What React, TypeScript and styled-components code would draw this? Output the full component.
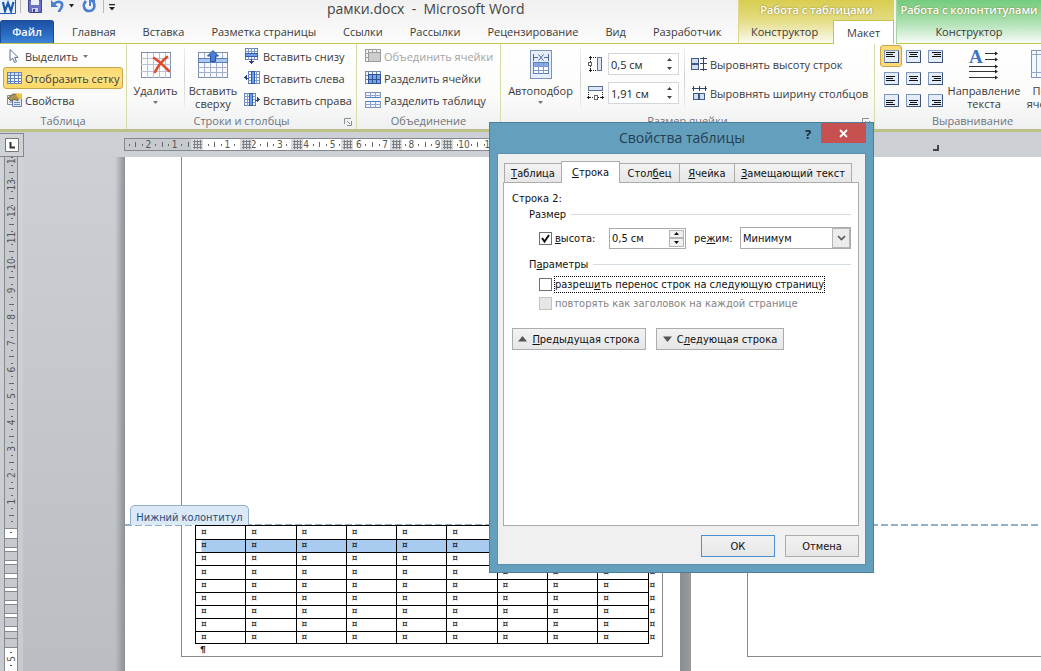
import React from "react";
import styled, { createGlobalStyle, css } from "styled-components";

const UI = `"Open Sans", "Noto Sans", sans-serif`;
const DLG = `"DejaVu Sans Condensed", "DejaVu Sans", sans-serif`;

const Global = createGlobalStyle`
  * { box-sizing: border-box; }
  body { margin: 0; background: #c3c7cb; font-family: ${UI}; font-size: 11px; color: #3a3a3a; overflow: hidden; }
  button, input, select { font: inherit; color: inherit; margin: 0; }
  svg { display: block; flex: none; }
`;

const Shell = styled.div`
  position: relative;
  display: flex;
  flex-direction: column;
  min-height: 100vh;
  overflow: hidden;
`;

/* ---------- Window header ---------- */

const Header = styled.header`
  display: flex;
  background: linear-gradient(#f0f0f0, #fcfcfc);
`;

const HeaderMain = styled.div`
  flex: 1;
  min-width: 0;
  border-bottom: 1px solid #c3c548;
`;

const TitleRow = styled.div`
  display: flex;
  height: 20px;
  align-items: flex-start;
`;

const QuickBar = styled.div`
  display: flex;
  align-items: flex-start;
  width: 127px;
`;

const QuickButton = styled.button`
  border: 0;
  padding: 0;
  background: none;
`;

const WindowTitle = styled.h1`
  flex: 1;
  margin: 0;
  padding-left: 200px;
  font-size: 14px;
  font-weight: 400;
  line-height: 17px;
  color: #444;
  white-space: nowrap;
`;

const TabRow = styled.nav`
  display: flex;
  gap: 27px;
  height: 23px;
`;

const RibbonTab = styled.button<{ $kind?: "file" | "active" }>`
  flex: none;
  border: 0;
  padding: 0;
  background: none;
  line-height: 22px;
  white-space: nowrap;
  ${(p) =>
    p.$kind === "file" &&
    css`
      width: 54px;
      margin-right: -9px;
      color: #fff;
      font-weight: 600;
      border: 1px solid #1a4c96;
      border-bottom: 0;
      border-radius: 3px 3px 0 0;
      background: linear-gradient(#1c51a3, #2a6cc4 60%, #3c83d6);
    `}
  ${(p) =>
    p.$kind === "active" &&
    css`
      flex: 1;
      height: 24px;
      background: #fff;
      border: 1px solid #c3c548;
      border-bottom: 0;
    `}
`;

const Context = styled.div<{ $tone: "yellow" | "green" }>`
  flex: none;
  width: ${(p) => (p.$tone === "yellow" ? "156px" : "145px")};
  margin-left: ${(p) => (p.$tone === "yellow" ? "0" : "2px")};
  border-bottom: 1px solid #c3c548;
  background: ${(p) =>
    p.$tone === "yellow"
      ? "linear-gradient(#d8cd50, #e3db80 45%, #fbfaf0)"
      : "linear-gradient(#74cc7c, #a4dda9 45%, #f6fbf6)"};
  border-left: 1px solid ${(p) => (p.$tone === "yellow" ? "#ddd787" : "#a6d6a6")};
`;

const ContextTitle = styled.div`
  height: 20px;
  line-height: 20px;
  text-align: center;
  color: #fff;
  font-weight: 600;
  white-space: nowrap;
  text-shadow: 0 0 2px #77762f;
`;

const ContextTabs = styled.div<{ $center?: boolean }>`
  display: flex;
  gap: 15px;
  height: 23px;
  padding-left: ${(p) => (p.$center ? 0 : 12)}px;
  justify-content: ${(p) => (p.$center ? "center" : "flex-start")};
`;

/* ---------- Ribbon ---------- */

const Ribbon = styled.div`
  display: flex;
  height: 88px;
  flex: none;
  background: linear-gradient(#ffffff, #fbfbfa 60%, #eff0f1);
  border-bottom: 3px solid #bdc087;
`;

const Group = styled.section<{ $w: number }>`
  display: flex;
  flex-direction: column;
  flex: none;
  width: ${(p) => p.$w}px;
  padding-top: 1px;
  border-right: 1px solid #d9dbab;
`;

const GroupBody = styled.div`
  display: flex;
  height: 67px;
`;

const Caption = styled.div`
  display: flex;
  justify-content: center;
  position: relative;
  line-height: 17px;
  color: #70747c;
`;

const Launcher = styled.button`
  position: absolute;
  right: 4px;
  top: 6px;
  padding: 0;
  border: 0;
  background: none;
`;

const Stack = styled.div<{ $pad?: number }>`
  display: flex;
  flex-direction: column;
  padding-left: ${(p) => p.$pad ?? 0}px;
`;

const SmallButton = styled.button<{ $on?: boolean }>`
  display: flex;
  align-items: center;
  gap: 2px;
  height: 22px;
  padding: 0 3px 0 2px;
  border: 1px solid ${(p) => (p.$on ? "#c9a64c" : "transparent")};
  border-radius: 3px;
  background: ${(p) => (p.$on ? "linear-gradient(#fbd972, #fde183 50%, #fdd866)" : "none")};
  white-space: nowrap;
  &:disabled { color: #a3a3a3; }
`;

const BigButton = styled.button<{ $w: number }>`
  display: flex;
  flex-direction: column;
  flex: none;
  align-items: center;
  width: ${(p) => p.$w}px;
  height: 66px;
  padding: 3px 0 0;
  border: 0;
  background: none;
  line-height: 13px;
  white-space: nowrap;
  svg + span { margin-top: 5px; }
  span + svg { margin-top: 4px; }
`;

const Divider = styled.div`
  width: 1px;
  margin: 2px 0;
  background: linear-gradient(#f2f2f2, #cfd1d4, #f2f2f2);
`;

const SizeColumn = styled.div<{ $tight?: boolean }>`
  display: flex;
  flex-direction: column;
  gap: 7px;
  padding: ${(p) => (p.$tight ? "8px 0 0 3px" : "8px 5px 0 6px")};
`;

const SizeRow = styled.div`
  display: flex;
  align-items: center;
  gap: 4px;
  height: 22px;
`;

const RibbonSpin = styled.div`
  display: flex;
  align-items: center;
  width: 71px;
  height: 22px;
  border: 1px solid #d5d7da;
  background: #fff;
  color: #222;
`;

const BareInput = styled.input`
  flex: 1;
  min-width: 0;
  height: 100%;
  border: 0;
  padding: 0 2px;
  outline: 0;
  background: none;
`;

const SpinButtons = styled.div`
  display: flex;
  flex-direction: column;
  align-items: center;
  width: 18px;
  gap: 6px;
`;

const ArrowButton = styled.button`
  display: block;
  padding: 0;
  border: 0;
  background: none;
`;

const AlignGrid = styled.div`
  display: grid;
  flex: none;
  grid-template-columns: repeat(3, 22px);
  grid-auto-rows: 22px;
  padding-left: 5px;
`;

const AlignButton = styled.button<{ $on?: boolean }>`
  display: grid;
  place-items: center;
  padding: 0;
  border: 1px solid ${(p) => (p.$on ? "#c9a64c" : "transparent")};
  border-radius: 3px;
  background: ${(p) => (p.$on ? "#fcdb76" : "none")};
`;

/* ---------- Icons ---------- */

const Down = ({ c = "#777" }: { c?: string }) => (
  <svg width="5" height="3" viewBox="0 0 5 3"><path d="M0 0h5L2.500 3z" fill={c} /></svg>
);
const Up = ({ c = "#444" }: { c?: string }) => (
  <svg width="5" height="3" viewBox="0 0 5 3"><path d="M0 3h5L2.500 0z" fill={c} /></svg>
);

const Svg16 = ({ children }: { children: React.ReactNode }) => (
  <svg width="17" height="16" viewBox="0 0 17 16" fill="none" shapeRendering="crispEdges">{children}</svg>
);

const CursorIcon = () => (
  <svg width="17" height="16" viewBox="0 0 17 16">
    <path d="M4 1.500v11l2.600-2.300 1.900 4.300 2-.9-1.900-4.200h3.500z" fill="#fdfdff" stroke="#5b6f98" strokeWidth="1" />
  </svg>
);
const GridIcon = () => (
  <Svg16>
    <path d="M1.500 2.500h14v11h-14z" fill="#f8fafe" stroke="#6d88b8" />
    <path d="M2 3h13v2H2zM2 3h2v10H2z" fill="#d3e0f4" />
    <path d="M1 5.500h15M1 8.500h15M1 11.500h15M4.500 2v12M8.500 2v12M12.500 2v12" stroke="#5f80ba" />
  </Svg16>
);
const PropsIcon = () => (
  <svg width="17" height="16" viewBox="0 0 17 16">
    <path d="M1.500 3.500h10v9h-10z" fill="#eef2f8" stroke="#7a8cab" />
    <path d="M6.500 6.500h9v8h-9z" fill="#dce6f3" stroke="#6980a6" />
    <path d="M8 10.500h6M8 12.500h6M3 10h3" stroke="#6c8cc0" />
    <path d="M2 6l5-4 7 .500-2 6-4-1-3 1.500z" fill="#a8945a" stroke="#5d5130" strokeWidth=".8" />
    <path d="M9.500 1.500h6.500v5l-3 1z" fill="#efc33f" />
  </svg>
);
const InsertBelowIcon = () => (
  <Svg16>
    <path d="M1.500.5h12v11h-12z" fill="#f6f9fe" stroke="#6583bb" />
    <path d="M1 3.500h13M4.500 0v12M7.500 0v12M10.500 0v12" stroke="#7f9aca" />
    <path d="M1.500 5.500h12v3h-12z" fill="#6fa0ee" stroke="#2f5cab" />
    <path d="M7 11h1v2h2l-2.500 3L5 13h2z" fill="#2a4680" />
  </Svg16>
);
const InsertSideIcon = ({ right }: { right?: boolean }) => (
  <svg width="17" height="16" viewBox="0 0 17 16" fill="none" shapeRendering="crispEdges">
    <g transform={right ? "translate(16 0) scale(-1 1)" : undefined}>
      <path d="M4.500 1.500h11v12h-11z" fill="#f6f9fe" stroke="#6583bb" />
      <path d="M4 4.500h12M4 7.500h12M4 10.500h12M12.500 1v13" stroke="#7f9aca" />
      <path d="M7.500 1.500h3v12h-3z" fill="#6fa0ee" stroke="#2f5cab" />
      <path d="M5 7.500H3V5L0 7.500 3 10V8.500h2z" fill="#2a4680" />
    </g>
  </svg>
);
const MergeIcon = () => (
  <Svg16>
    <path d="M.5 1.500h15v12H.5z" fill="#f1f1f1" stroke="#9b9b9b" />
    <path d="M0 5.500h3M0 9.500h3M3.500 1v12M7.500 1v3M11.500 1v3" stroke="#a5a5a5" />
    <path d="M3.500 4.500h12v9h-12z" fill="#cdcdcd" stroke="#9b9b9b" />
  </Svg16>
);
const SplitCellsIcon = () => (
  <Svg16>
    <path d="M.5 1.500h15v12H.5z" fill="#f1f5fb" stroke="#6f87b0" />
    <path d="M0 5.500h3M0 9.500h3M3.500 1v12M7.500 1v3M11.500 1v3" stroke="#6f87b0" />
    <path d="M3.500 4.500h12v9h-12z" fill="#7ba3e4" stroke="#2f5297" />
    <path d="M7.500 4v9M11.500 4v9M3 9.500h12" stroke="#2f5297" />
  </Svg16>
);
const SplitTableIcon = () => (
  <Svg16>
    <path d="M.5.5h15v5H.5zM.5 9.500h15v6H.5z" fill="#f3f7fd" stroke="#7b93bd" />
    <path d="M0 3.500h16M5.500 1v5M10.500 1v5M0 12.500h16M5.500 10v5M10.500 10v5" stroke="#8fa5cb" />
    <path d="M1 5h14v1H1zM1 9h14v1H1z" fill="#4d7fd0" />
  </Svg16>
);
const DeleteIcon = () => (
  <svg width="30" height="31" viewBox="0 0 30 31" fill="none">
    <g shapeRendering="crispEdges">
      <path d="M.5 4.500h29v25H.5z" fill="#fbfcfe" stroke="#7f8fae" />
      <path d="M0 10.500h30M0 16.500h30M0 23.500h30M6.500 5v25M12.500 5v25M18.500 5v25M24.500 5v25" stroke="#b9c3d4" />
    </g>
    <path d="M13 10c5 3 10 8 15 13M26 9c-5 4-9 9-12 15" stroke="#e04a2a" strokeWidth="2.600" strokeLinecap="round" />
  </svg>
);
const InsertAboveIcon = () => (
  <svg width="30" height="31" viewBox="0 0 30 31" fill="none">
    <g shapeRendering="crispEdges">
      <path d="M.5 4.500h29v25H.5z" fill="#f7f9fd" stroke="#7f8fae" />
      <path d="M0 19.500h30M0 24.500h30M6.500 5v25M12.500 5v25M18.500 5v25M24.500 5v25" stroke="#a3b1ca" />
      <path d="M.5 10.500h29v4H.5z" fill="#a9c6f0" stroke="#5d7db8" />
    </g>
    <path d="M15 2.500l5.500 5.500h-3v5.500h-5V8h-3z" fill="#4a7fd6" stroke="#2b55a3" />
  </svg>
);
const AutofitIcon = () => (
  <svg width="24" height="31" viewBox="0 0 24 31" fill="none" shapeRendering="crispEdges">
    <path d="M1.500 2.500h21v28h-21z" fill="#e4edf9" stroke="#7d93b8" />
    <path d="M4.500 6v7M19.500 6v7M5 9.500h4M15 9.500h4" stroke="#4d6a9c" />
    <path d="M9.500 6.500l5 6M14.500 6.500l-5 6" stroke="#4d6a9c" shapeRendering="auto" />
    <path d="M4.500 14.500h15v11h-15z" fill="#fff" stroke="#5d7db8" />
    <path d="M5 15h14v3H5z" fill="#86abe6" />
    <path d="M4 18.500h16M4 22.500h16M9.500 15v11M14.500 15v11" stroke="#7b9ad0" />
  </svg>
);
const HeightIcon = () => (
  <Svg16>
    <path d="M3.500 0v4M2 1.500h3M3.500 12v4M2 14.500h3M6 1.500h1M8 1.500h1M6 14.500h1M8 14.500h1M3.500 5v1M3.500 10v1" stroke="#222" />
    <path d="M1.500 6.500h3v3h-3z" fill="#fff" stroke="#666" />
    <path d="M10.500 1.500h4v13h-4z" fill="#dbe7f6" stroke="#5c7096" />
  </Svg16>
);
const WidthIcon = () => (
  <Svg16>
    <path d="M1.500 1.500h14v4h-14z" fill="#dbe7f6" stroke="#5c7096" />
    <path d="M1.500 7v1M1.500 9v1M15.500 7v1M15.500 9v1M0 12.500h4M1.500 11v3M13 12.500h4M15.500 11v3M5 12.500h1M11 12.500h1" stroke="#222" />
    <path d="M7.500 10.500h3v4h-3z" fill="#fff" stroke="#666" />
  </Svg16>
);
const EqualRowsIcon = () => (
  <Svg16>
    <path d="M.5 2.500h7v5h-7zM.5 8.500h7v5h-7z" fill="#cfe0f5" stroke="#44587f" />
    <path d="M9 2.500h7M9 7.500h7M9 13.500h7M12.500 1v14" stroke="#33456d" />
  </Svg16>
);
const EqualColsIcon = () => (
  <Svg16>
    <path d="M2.500 8.500h5v6h-5zM8.500 8.500h5v6h-5z" fill="#cfe0f5" stroke="#44587f" />
    <path d="M1 3.500h15M2.500 1v5M8.500 1v5M14.500 1v5" stroke="#33456d" />
  </Svg16>
);
const AlignIcon = ({ h, v }: { h: number; v: number }) => {
  const y = 2 + v * 2;
  const x = [2, 3, 4][h];
  return (
    <svg width="15" height="13" viewBox="0 0 15 13" shapeRendering="crispEdges">
      <path d="M.5.5h14v12H.5z" fill="#e3ecf9" stroke="#8297bd" />
      <path d="M14.500 1v11.500H1" fill="none" stroke="#3f5580" />
      <path d={`M${x} ${y}.5h9M${x + h} ${y + 2}.5h7M${x} ${y + 4}.5h9`} stroke="#111" />
    </svg>
  );
};
const DirectionIcon = () => (
  <svg width="32" height="31" viewBox="0 0 32 31" overflow="visible">
    <text x="1" y="15" fontFamily="Liberation Serif, serif" fontWeight="700" fontSize="19" fill="#3d73c6">A</text>
    <path d="M17 5.500h12M17 11.500h12M1 18.500h28M1 23.500h28M1 29.500h28" stroke="#333" />
    <path d="M27 3.500l3 2-3 2zM27 9.500l3 2-3 2zM27 16.500l3 2-3 2zM27 21.500l3 2-3 2zM27 27.500l3 2-3 2z" fill="#222" />
  </svg>
);
const MarginsIcon = () => (
  <svg width="30" height="31" viewBox="0 0 30 31" fill="none" shapeRendering="crispEdges">
    <path d="M.5 2.500h29v27H.5z" fill="#f4f8fd" stroke="#7d93b8" />
    <path d="M5.500 2v27M0 6.500h30M0 24.500h30" stroke="#8fa5cb" />
  </svg>
);
const LaunchIcon = () => (
  <svg width="8" height="8" viewBox="0 0 8 8" fill="none"><path d="M.5 6V.5H7M3 3l3 3M7.500 3v4.500H3" stroke="#8a8f98" /></svg>
);
const QuickIcons = () => (
  <svg width="127" height="17" viewBox="0 0 127 17" fill="none">
    <path d="M-1 -1h16.500v14.500H-1z" fill="#e6f0fb" stroke="#2c5cab" />
    <path d="M3 2l2 9 3-8 3 8 2.500-9" stroke="#1f57a8" strokeWidth="2.200" />
    <path d="M20.500 0v13M103.500 0v13" stroke="#b8b8b8" />
    <path d="M28.500 0h13v12.500h-12l-1-1z" fill="#6a70c4" stroke="#3f458f" />
    <path d="M31 0h8v5h-8z" fill="#eceefa" />
    <path d="M32 8h6v4h-6z" fill="#c9cdec" /><path d="M33 9h2v3h-2z" fill="#3f458f" />
    <path d="M54 4c4-4 9-2 8 2-.5 3-3 4-3 6" stroke="#4a7fd2" strokeWidth="2.600" />
    <path d="M51 0v7h7z" fill="#4a7fd2" />
    <path d="M69 4h5l-2.500 3.500zM109 7h6l-3 3.500zM109 4h6v1.200h-6z" fill="#222" />
    <path d="M86 1c-4 4-2 10 3 10s7-5 4-10" stroke="#4a7fd2" strokeWidth="2.600" />
    <path d="M89 0h6v2h-4v4h-2z" fill="#4a7fd2" />
  </svg>
);

/* ---------- Workspace ---------- */

const Workspace = styled.main`
  display: flex;
  flex: 1;
  background: linear-gradient(#cdd0d5, #babec3);
`;

const Gutter = styled.div`
  display: flex;
  flex-direction: column;
  flex: none;
  width: 24px;
  padding-top: 1px;
`;

const TabCorner = styled.button`
  display: grid;
  place-items: center;
  width: 24px;
  height: 24px;
  padding: 0;
  border: 1px solid #85898f;
  border-left: 0;
  background: #cfd2d6;
`;

const Canvas = styled.div`
  display: flex;
  flex-direction: column;
  flex: 1;
  min-width: 0;
`;

const RulerStrip = styled.div`
  height: 25px;
  padding: 6px 0 0 100px;
  overflow: hidden;
`;

const Pages = styled.div`
  display: flex;
  flex: 1;
`;

const PageShadow = styled.div`
  flex: none;
  width: 101px;
  background: linear-gradient(to right, transparent 91px, #8c9094);
`;

const PageGap = styled.div`
  flex: none;
  width: 11px;
  background: linear-gradient(to right, #8b8e91, #999c9f);
`;

const Page = styled.article<{ $last?: boolean }>`
  display: flex;
  flex-direction: column;
  ${(p) => (p.$last ? "flex: 1;" : "flex: none; width: 555px;")}
  background: #fff;
`;

const BodyArea = styled.div<{ $last?: boolean }>`
  flex: 1;
  margin: ${(p) => (p.$last ? "0 0 0 56px" : "0 17px 0 56px")};
  border-left: 1px solid #8a8a8a;
  border-right: ${(p) => (p.$last ? "0" : "1px solid #8a8a8a")};
`;

const FooterArea = styled.footer<{ $last?: boolean }>`
  position: relative;
  height: 147px;
  padding: ${(p) => (p.$last ? "0 0 14px 56px" : "0 17px 14px 56px")};
  background: repeating-linear-gradient(to right, #8fb0ca 0 7px, transparent 7px 10px) top / 100% 2px no-repeat;
`;

const FooterFrame = styled.div<{ $last?: boolean }>`
  height: 133px;
  padding: 1px 0 0 13px;
  border: 1px solid #8a8a8a;
  border-top: 0;
  border-right-width: ${(p) => (p.$last ? 0 : 1)}px;
`;

const FooterTag = styled.div`
  position: absolute;
  left: 5px;
  bottom: 146px;
  width: 119px;
  height: 20px;
  line-height: 23px;
  text-align: center;
  color: #2b4d7c;
  background: #dbe8f6;
  border: 1px solid #93aecb;
  border-bottom: 0;
  border-radius: 5px 5px 0 0;
  font-family: ${DLG};
  white-space: nowrap;
`;

const DocTable = styled.table`
  table-layout: fixed;
  width: 464px;
  border-collapse: collapse;
  font: 9px/9px "DejaVu Sans", sans-serif;
  color: #000;
`;

const Cell = styled.td<{ $hot?: boolean; $first?: boolean; $end?: boolean; $h: number }>`
  height: ${(p) => p.$h}px;
  padding: 0 0 1px 5px;
  border: 1px solid #000;
  ${(p) => p.$end && css`border-width: 0 0 0 1px; padding-left: 1px;`}
  ${(p) => p.$hot && css`background: linear-gradient(to right, ${p.$first ? "#fff 5px, #a9cbef 5px" : "#a9cbef, #a9cbef"});`}
`;

const Pilcrow = styled.div`
  padding-left: 5px;
  font: 700 9px/13px "DejaVu Sans", sans-serif;
  color: #222;
`;

/* ---------- Dialog ---------- */

const Dialog = styled.section`
  position: absolute;
  left: 489px;
  top: 122px;
  width: 385px;
  height: 451px;
  padding: 0 7px 7px;
  border: 1px solid #4c8099;
  background: #659fbe;
  display: flex;
  flex-direction: column;
  font-family: ${DLG};
  color: #111;
`;

const DialogBar = styled.header`
  display: flex;
  justify-content: flex-end;
  align-items: flex-start;
  height: 30px;
`;

const DialogTitle = styled.h2`
  flex: 1;
  margin: 0;
  padding-left: 70px;
  font: 400 14px/29px ${UI};
  text-align: center;
  color: #24404f;
`;

const HelpButton = styled.button`
  width: 22px;
  height: 22px;
  padding: 0;
  border: 0;
  background: none;
  font: 700 13px/20px ${UI};
  color: #1c2b33;
`;

const CloseButton = styled.button`
  display: grid;
  place-items: center;
  width: 45px;
  height: 20px;
  margin-left: 2px;
  padding: 0;
  border: 0;
  background: #c75050;
`;

const Client = styled.div`
  display: flex;
  flex-direction: column;
  flex: 1;
  padding: 7px 6px 7px 5px;
  background: #f0f0f0;
  border: 1px solid #5b91ad;
`;

const DialogTabs = styled.div`
  display: flex;
  align-items: flex-end;
  height: 22px;
  padding-left: 2px;
  margin-bottom: -1px;
`;

const DialogTab = styled.button<{ $on?: boolean; $w: number }>`
  width: ${(p) => p.$w}px;
  height: ${(p) => (p.$on ? 22 : 19)}px;
  margin-bottom: ${(p) => (p.$on ? 0 : 1)}px;
  margin-left: -1px;
  padding: 0;
  border: 1px solid #acacac;
  border-bottom: 0;
  background: ${(p) => (p.$on ? "#fff" : "linear-gradient(#f3f3f3, #e6e6e6)")};
  position: relative;
  white-space: nowrap;
`;

const Panel = styled.div`
  flex: 1;
  padding: 8px 7px 0 8px;
  background: #fff;
  border: 1px solid #acacac;
`;

const Line = styled.div`
  height: 15px;
  line-height: 15px;
`;

const SectionTitle = styled.div`
  display: flex;
  align-items: center;
  gap: 5px;
  height: 16px;
  padding-left: 17px;
  &::after { content: ""; flex: 1; height: 1px; background: #d6dde2; }
`;

const FormRow = styled.div`
  display: flex;
  align-items: center;
  height: 22px;
  margin: 5px 0 7px;
  padding-left: 27px;
`;

const Options = styled.div`
  padding-top: 3px;
`;

const OptionRow = styled.div`
  display: flex;
  align-items: center;
  height: 19px;
  padding-left: 27px;
`;

const Check = styled.input`
  appearance: none;
  flex: none;
  width: 13px;
  height: 13px;
  margin: 0 2px 0 0;
  border: 1px solid #707070;
  background: #fff;
  &:disabled { border-color: #c4c4c4; background: #e6e6e6; }
`;

const CheckBox = styled.span`
  display: grid;
  margin-right: 3px;
  > * { grid-area: 1 / 1; margin: 0; }
  svg { pointer-events: none; position: relative; }
`;

const OptionLabel = styled.label<{ $focus?: boolean; $dim?: boolean }>`
  line-height: 15px;
  border: 1px dotted ${(p) => (p.$focus ? "#000" : "transparent")};
  color: ${(p) => (p.$dim ? "#838383" : "inherit")};
  white-space: nowrap;
`;

const SpinBox = styled.div`
  display: flex;
  width: 77px;
  height: 21px;
  padding: 1px;
  border: 1px solid #ababab;
  background: #fff;
  input { padding: 0 1px; }
`;

const SpinSide = styled.div`
  display: grid;
  grid-template-rows: 1fr 1fr;
  width: 15px;
  button {
    display: grid;
    place-items: center;
    border: 1px solid #b5b5b5;
    background: #f0f0f0;
  }
`;

const SelectBox = styled.div`
  display: grid;
  grid-template-columns: 1fr 18px;
  width: 111px;
  height: 22px;
  border: 1px solid #ababab;
  background: #fff;
  select {
    grid-area: 1 / 1 / 2 / 3;
    appearance: none;
    border: 0;
    padding: 0 2px;
    outline: 0;
    background: none;
  }
  span {
    grid-area: 1 / 2;
    display: grid;
    place-items: center;
    border: 1px solid #b5b5b5;
    background: #ececec;
    pointer-events: none;
  }
`;

const PushButton = styled.button<{ $w: number; $main?: boolean }>`
  display: flex;
  align-items: center;
  justify-content: center;
  gap: 5px;
  width: ${(p) => p.$w}px;
  height: 22px;
  padding: 0;
  border: 1px solid ${(p) => (p.$main ? "#4a8fd0" : "#acacac")};
  background: linear-gradient(#f2f2f2, #e6e6e6);
  white-space: nowrap;
`;

const ButtonRow = styled.div<{ $end?: boolean }>`
  display: flex;
  gap: 10px;
  margin-top: ${(p) => (p.$end ? 9 : 15)}px;
  justify-content: ${(p) => (p.$end ? "flex-end" : "flex-start")};
`;

const FieldLabel = styled.label<{ $w: number; $indent?: boolean }>`
  width: ${(p) => p.$w}px;
  padding-left: ${(p) => (p.$indent ? 8 : 0)}px;
  white-space: nowrap;
`;

/* ---------- Rulers ---------- */

const RULER_FONT = "DejaVu Sans Condensed, sans-serif";
const UNIT = 26.3;

const HorizontalRuler = () => {
  const zero = 77;
  const nums = [-2, -1, 1, 2, 3, 4, 5, 6, 7, 8, 9, 10, 11];
  const markers = [68, 117, 168, 218, 267, 318];
  const small: React.ReactNode[] = [];
  for (let q = -11; q <= 46; q++) {
    if (q % 4 === 0) continue;
    const x = Math.round(zero + (q * UNIT) / 4);
    small.push(<rect key={q} x={x} y={q % 2 === 0 ? 4 : 6} width={1} height={q % 2 === 0 ? 5 : 2} fill="#666" />);
  }
  return (
    <svg width="820" height="18" viewBox="0 0 820 18">
      <rect x="0" y="0" width="560" height="12" fill="#c6cace" />
      <rect x="77" y="0" width="470" height="12" fill="#fff" />
      {small}
      {nums.map((n) => (
        <text key={n} x={zero + n * UNIT} y="10" fontSize="10" fontFamily={RULER_FONT} textAnchor="middle" fill="#555">{Math.abs(n)}</text>
      ))}
      {markers.map((x) => (
        <g key={x} shapeRendering="crispEdges">
          <rect x={x - 1} y="0" width="12" height="12" fill="#d9dcdf" />
          <path d={`M${x + 2}.500 2v9M${x + 5}.500 2v9M${x + 8}.500 2v9M${x + 1} 3.500h9M${x + 1} 6.500h9M${x + 1} 9.500h9`} stroke="#7d8084" />
        </g>
      ))}
      <rect x=".5" y=".5" width="560" height="12" fill="none" stroke="#85898f" shapeRendering="crispEdges" />
      <path d="M814 7v5h-5" fill="none" stroke="#444" strokeWidth="2" />
    </svg>
  );
};

const VerticalRuler = () => {
  const zero = 371;
  const small: React.ReactNode[] = [];
  for (let q = 1; q <= 55; q++) {
    if (q % 4 === 0) continue;
    const y = Math.round(zero - (q * 26.4) / 4);
    small.push(<rect key={q} x={q % 2 === 0 ? 9 : 11} y={y} width={q % 2 === 0 ? 5 : 2} height={1} fill="#666" />);
  }
  const white = [[371, 10], [390, 4], [403, 4], [416, 5], [430, 4], [443, 4], [456, 4], [469, 5], [490, 26]];
  const nums = Array.from({ length: 14 }, (_, i) => i + 1);
  return (
    <svg width="24" height="514" viewBox="0 0 24 514">
      <rect x="0" y="0" width="23" height="514" fill="#d3d6d9" opacity=".5" />
      <rect x="4" y="0" width="13" height="514" fill="#c6cace" />
      {white.map(([y, h]) => (
        <rect key={y} x="4.500" y={y + 0.5} width="13" height={h} fill="#fff" stroke="#85898f" shapeRendering="crispEdges" />
      ))}
      <path d="M4 481.500h13M4.500 0v514M17.500 0v514" stroke="#85898f" shapeRendering="crispEdges" />
      {small}
      {nums.map((n) => (
        <text key={n} transform={`translate(15 ${zero - n * 26.4}) rotate(-90)`} fontSize="10" fontFamily={RULER_FONT} textAnchor="middle" fill="#555">{n}</text>
      ))}
      <text transform="translate(15 502) rotate(-90)" fontSize="10" fontFamily={RULER_FONT} textAnchor="middle" fill="#555">5</text>
      <rect x="10" y="375" width="2" height="1" fill="#555" />
      <rect x="10" y="495" width="2" height="1" fill="#555" />
      <rect x="10" y="508" width="2" height="1" fill="#555" />
    </svg>
  );
};

/* ---------- Page ---------- */

const tabs = ["Главная", "Вставка", "Разметка страницы", "Ссылки", "Рассылки", "Рецензирование", "Вид", "Разработчик"];
const rowHeights = [14, 13, 13, 14, 13, 13, 13, 13, 12];

export default function App() {
  return (
    <Shell>
      <Global />
      <Header>
        <HeaderMain>
          <TitleRow>
            <QuickBar>
              <QuickButton aria-label="Панель быстрого доступа"><QuickIcons /></QuickButton>
            </QuickBar>
            <WindowTitle>рамки.docx&nbsp; -&nbsp; Microsoft Word</WindowTitle>
          </TitleRow>
          <TabRow>
            <RibbonTab $kind="file">Файл</RibbonTab>
            {tabs.map((t) => <RibbonTab key={t}>{t}</RibbonTab>)}
          </TabRow>
        </HeaderMain>
        <Context $tone="yellow">
          <ContextTitle>Работа с таблицами</ContextTitle>
          <ContextTabs>
            <RibbonTab>Конструктор</RibbonTab>
            <RibbonTab $kind="active">Макет</RibbonTab>
          </ContextTabs>
        </Context>
        <Context $tone="green">
          <ContextTitle>Работа с колонтитулами</ContextTitle>
          <ContextTabs $center><RibbonTab>Конструктор</RibbonTab></ContextTabs>
        </Context>
      </Header>

      <Ribbon>
        <Group $w={127}>
          <GroupBody>
            <Stack $pad={3}>
              <SmallButton><CursorIcon />Выделить&nbsp;<Down /></SmallButton>
              <SmallButton $on><GridIcon />Отобразить сетку</SmallButton>
              <SmallButton><PropsIcon />Свойства</SmallButton>
            </Stack>
          </GroupBody>
          <Caption>Таблица</Caption>
        </Group>
        <Group $w={230}>
          <GroupBody>
            <BigButton $w={57}><DeleteIcon /><span>Удалить</span><Down /></BigButton>
            <Divider />
            <BigButton $w={56}><InsertAboveIcon /><span>Вставить<br />сверху</span></BigButton>
            <Stack>
              <SmallButton><InsertBelowIcon />Вставить снизу</SmallButton>
              <SmallButton><InsertSideIcon />Вставить слева</SmallButton>
              <SmallButton><InsertSideIcon right />Вставить справа</SmallButton>
            </Stack>
          </GroupBody>
          <Caption>Строки и столбцы<Launcher aria-label="Строки и столбцы"><LaunchIcon /></Launcher></Caption>
        </Group>
        <Group $w={144}>
          <GroupBody>
            <Stack $pad={5}>
              <SmallButton disabled><MergeIcon />Объединить ячейки</SmallButton>
              <SmallButton><SplitCellsIcon />Разделить ячейки</SmallButton>
              <SmallButton><SplitTableIcon />Разделить таблицу</SmallButton>
            </Stack>
          </GroupBody>
          <Caption>Объединение</Caption>
        </Group>
        <Group $w={374}>
          <GroupBody>
            <BigButton $w={79}><AutofitIcon /><span>Автоподбор</span><Down /></BigButton>
            <Divider />
            <SizeColumn>
              <SizeRow>
                <HeightIcon />
                <RibbonSpin>
                  <BareInput aria-label="Высота" defaultValue="0,5 см" />
                  <SpinButtons>
                    <ArrowButton aria-label="Больше"><Up /></ArrowButton>
                    <ArrowButton aria-label="Меньше"><Down c="#444" /></ArrowButton>
                  </SpinButtons>
                </RibbonSpin>
              </SizeRow>
              <SizeRow>
                <WidthIcon />
                <RibbonSpin>
                  <BareInput aria-label="Ширина" defaultValue="1,91 см" />
                  <SpinButtons>
                    <ArrowButton aria-label="Больше"><Up /></ArrowButton>
                    <ArrowButton aria-label="Меньше"><Down c="#444" /></ArrowButton>
                  </SpinButtons>
                </RibbonSpin>
              </SizeRow>
            </SizeColumn>
            <Divider />
            <SizeColumn $tight>
              <SmallButton><EqualRowsIcon />Выровнять высоту строк</SmallButton>
              <SmallButton><EqualColsIcon />Выровнять ширину столбцов</SmallButton>
            </SizeColumn>
          </GroupBody>
          <Caption>Размер ячейки<Launcher aria-label="Размер ячейки"><LaunchIcon /></Launcher></Caption>
        </Group>
        <Group $w={196}>
          <GroupBody>
            <AlignGrid>
              {[0, 1, 2].map((v) =>
                [0, 1, 2].map((h) => (
                  <AlignButton key={`${v}${h}`} $on={v === 0 && h === 0} aria-label={`Выравнивание ${v + 1}-${h + 1}`}>
                    <AlignIcon h={h} v={v} />
                  </AlignButton>
                ))
              )}
            </AlignGrid>
            <BigButton $w={76}><DirectionIcon /><span>Направление<br />текста</span></BigButton>
            <BigButton $w={48}><MarginsIcon /><span>Поля<br />ячейки</span></BigButton>
          </GroupBody>
          <Caption>Выравнивание</Caption>
        </Group>
      </Ribbon>

      <Workspace>
        <Gutter>
          <TabCorner aria-label="Табуляция">
            <svg width="14" height="14" viewBox="0 0 14 14">
              <path d="M.5.5h13v13H.5z" fill="#fff" stroke="#777" />
              <path d="M5.500 4v5.500H10" fill="none" stroke="#333" strokeWidth="2" />
            </svg>
          </TabCorner>
          <VerticalRuler />
        </Gutter>
        <Canvas>
          <RulerStrip><HorizontalRuler /></RulerStrip>
          <Pages>
            <PageShadow />
            <Page>
              <BodyArea />
              <FooterArea>
                <FooterTag>Нижний колонтитул</FooterTag>
                <FooterFrame>
                  <DocTable>
                    <colgroup>
                      {Array.from({ length: 9 }, (_, i) => <col key={i} />)}
                      <col width={11} />
                    </colgroup>
                    <tbody>
                      {rowHeights.map((height, r) => (
                        <tr key={r}>
                          {Array.from({ length: 10 }, (_, c) => (
                            <Cell key={c} $h={height} $hot={r === 1 && c < 9} $first={c === 0} $end={c === 9}>¤</Cell>
                          ))}
                        </tr>
                      ))}
                    </tbody>
                  </DocTable>
                  <Pilcrow>¶</Pilcrow>
                </FooterFrame>
              </FooterArea>
            </Page>
            <PageGap />
            <Page $last>
              <BodyArea $last />
              <FooterArea $last><FooterFrame $last /></FooterArea>
            </Page>
          </Pages>
        </Canvas>
      </Workspace>

      <Dialog role="dialog" aria-labelledby="dlg-title">
        <DialogBar>
          <DialogTitle id="dlg-title">Свойства таблицы</DialogTitle>
          <HelpButton>?</HelpButton>
          <CloseButton aria-label="Закрыть">
            <svg width="9" height="9" viewBox="0 0 9 9"><path d="M1 1l7 7M8 1L1 8" stroke="#fff" strokeWidth="1.800" /></svg>
          </CloseButton>
        </DialogBar>
        <Client>
          <DialogTabs role="tablist">
            <DialogTab $w={58} role="tab"><u>Т</u>аблица</DialogTab>
            <DialogTab $w={59} $on role="tab"><u>С</u>трока</DialogTab>
            <DialogTab $w={61} role="tab">Стол<u>б</u>ец</DialogTab>
            <DialogTab $w={56} role="tab"><u>Я</u>чейка</DialogTab>
            <DialogTab $w={118} role="tab"><u>З</u>амещающий текст</DialogTab>
          </DialogTabs>
          <Panel>
            <Line>Строка 2:</Line>
            <SectionTitle>Размер</SectionTitle>
            <FormRow>
              <CheckBox>
                <Check id="c-height" type="checkbox" defaultChecked />
                <svg width="13" height="13" viewBox="0 0 13 13"><path d="M3 6l2.500 3.500L10 3" fill="none" stroke="#111" strokeWidth="2" /></svg>
              </CheckBox>
              <FieldLabel $w={54} htmlFor="c-height"><u>в</u>ысота:</FieldLabel>
              <SpinBox>
                <BareInput aria-label="Высота строки" defaultValue="0,5 см" />
                <SpinSide>
                  <ArrowButton aria-label="Больше"><Up c="#111" /></ArrowButton>
                  <ArrowButton aria-label="Меньше"><Down c="#111" /></ArrowButton>
                </SpinSide>
              </SpinBox>
              <FieldLabel $w={54} $indent htmlFor="s-mode">ре<u>ж</u>им:</FieldLabel>
              <SelectBox>
                <select id="s-mode" defaultValue="min">
                  <option value="min">Минимум</option>
                  <option value="exact">Точно</option>
                </select>
                <span>
                  <svg width="9" height="6" viewBox="0 0 9 6"><path d="M1 1l3.500 3.500L8 1" fill="none" stroke="#555" strokeWidth="1.600" /></svg>
                </span>
              </SelectBox>
            </FormRow>
            <SectionTitle><span>П<u>а</u>раметры</span></SectionTitle>
            <Options>
              <OptionRow>
                <Check id="c-wrap" type="checkbox" />
                <OptionLabel $focus htmlFor="c-wrap">разреш<u>и</u>ть перенос строк на следующую страницу</OptionLabel>
              </OptionRow>
              <OptionRow>
                <Check id="c-rep" type="checkbox" disabled />
                <OptionLabel $dim htmlFor="c-rep">повторять как заголовок на каждой странице</OptionLabel>
              </OptionRow>
            </Options>
            <ButtonRow>
              <PushButton $w={134}>
                <svg width="9" height="6" viewBox="0 0 9 6"><path d="M0 5.500h9L4.500 0z" fill="#555" /></svg>
                <span><u>П</u>редыдущая строка</span>
              </PushButton>
              <PushButton $w={128}>
                <svg width="9" height="6" viewBox="0 0 9 6"><path d="M0 .5h9L4.500 6z" fill="#555" /></svg>
                <span>С<u>л</u>едующая строка</span>
              </PushButton>
            </ButtonRow>
          </Panel>
          <ButtonRow $end>
            <PushButton $w={74} $main>ОК</PushButton>
            <PushButton $w={74}>Отмена</PushButton>
          </ButtonRow>
        </Client>
      </Dialog>
    </Shell>
  );
}
